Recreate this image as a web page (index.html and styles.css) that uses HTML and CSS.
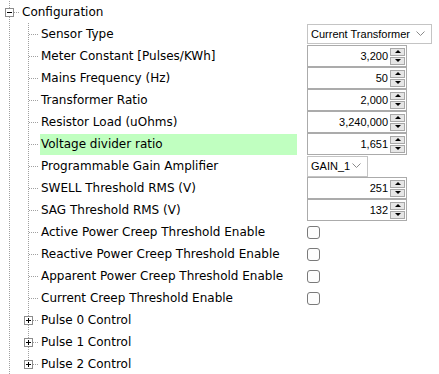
FILE: index.html
```html
<!DOCTYPE html>
<html lang="en">
<head>
    <meta charset="UTF-8">
    <title>Configuration</title>
    <link rel="stylesheet" href="styles.css">
</head>
<body>

<div class="tree">
    <div class="row">
        <span class="lv lv-root">
            <svg class="exp" width="9" height="9" viewBox="0 0 9 9"><rect x="0.5" y="0.5" width="8" height="8" fill="#fff" stroke="#8c8c8c"/><path d="M2 4.5h5" stroke="#000"/></svg>
        </span>
        <span class="name">Configuration</span>
    </div>

    <div class="row">
        <span class="lv outer"></span><span class="lv branch"></span>
        <span class="label">Sensor Type</span>
        <div class="combo wide"><span>Current Transformer</span><svg class="chev" width="9" height="6" viewBox="0 0 9 6"><path d="M0.5 0.5l4 4 4-4" fill="none" stroke="#8a8a8a"/></svg></div>
    </div>
    <div class="row">
        <span class="lv outer"></span><span class="lv branch"></span>
        <span class="label">Meter Constant [Pulses/KWh]</span>
        <div class="spin"><span class="val">3,200</span><span class="arrows"><span class="btn up"></span><span class="btn down"></span></span></div>
    </div>
    <div class="row">
        <span class="lv outer"></span><span class="lv branch"></span>
        <span class="label">Mains Frequency (Hz)</span>
        <div class="spin"><span class="val">50</span><span class="arrows"><span class="btn up"></span><span class="btn down"></span></span></div>
    </div>
    <div class="row">
        <span class="lv outer"></span><span class="lv branch"></span>
        <span class="label">Transformer Ratio</span>
        <div class="spin"><span class="val">2,000</span><span class="arrows"><span class="btn up"></span><span class="btn down"></span></span></div>
    </div>
    <div class="row">
        <span class="lv outer"></span><span class="lv branch"></span>
        <span class="label">Resistor Load (uOhms)</span>
        <div class="spin"><span class="val">3,240,000</span><span class="arrows"><span class="btn up"></span><span class="btn down"></span></span></div>
    </div>
    <div class="row">
        <span class="lv outer"></span><span class="lv branch"></span>
        <span class="label changed">Voltage divider ratio</span>
        <div class="spin"><span class="val">1,651</span><span class="arrows"><span class="btn up"></span><span class="btn down"></span></span></div>
    </div>
    <div class="row">
        <span class="lv outer"></span><span class="lv branch"></span>
        <span class="label">Programmable Gain Amplifier</span>
        <div class="combo small"><span>GAIN_1</span><svg class="chev" width="9" height="6" viewBox="0 0 9 6"><path d="M0.5 0.5l4 4 4-4" fill="none" stroke="#8a8a8a"/></svg></div>
    </div>
    <div class="row">
        <span class="lv outer"></span><span class="lv branch"></span>
        <span class="label">SWELL Threshold RMS (V)</span>
        <div class="spin"><span class="val">251</span><span class="arrows"><span class="btn up"></span><span class="btn down"></span></span></div>
    </div>
    <div class="row">
        <span class="lv outer"></span><span class="lv branch"></span>
        <span class="label">SAG Threshold RMS (V)</span>
        <div class="spin"><span class="val">132</span><span class="arrows"><span class="btn up"></span><span class="btn down"></span></span></div>
    </div>
    <div class="row">
        <span class="lv outer"></span><span class="lv branch"></span>
        <span class="label">Active Power Creep Threshold Enable</span>
        <span class="check"></span>
    </div>
    <div class="row">
        <span class="lv outer"></span><span class="lv branch"></span>
        <span class="label">Reactive Power Creep Threshold Enable</span>
        <span class="check"></span>
    </div>
    <div class="row">
        <span class="lv outer"></span><span class="lv branch"></span>
        <span class="label">Apparent Power Creep Threshold Enable</span>
        <span class="check"></span>
    </div>
    <div class="row">
        <span class="lv outer"></span><span class="lv branch"></span>
        <span class="label">Current Creep Threshold Enable</span>
        <span class="check"></span>
    </div>

    <div class="row">
        <span class="lv outer"></span>
        <span class="lv branch node">
            <svg class="exp" width="9" height="9" viewBox="0 0 9 9"><rect x="0.5" y="0.5" width="8" height="8" fill="#fff" stroke="#8c8c8c"/><path d="M2 4.5h5M4.5 2v5" stroke="#000"/></svg>
        </span>
        <span class="group">Pulse 0 Control</span>
    </div>
    <div class="row">
        <span class="lv outer"></span>
        <span class="lv branch node">
            <svg class="exp" width="9" height="9" viewBox="0 0 9 9"><rect x="0.5" y="0.5" width="8" height="8" fill="#fff" stroke="#8c8c8c"/><path d="M2 4.5h5M4.5 2v5" stroke="#000"/></svg>
        </span>
        <span class="group">Pulse 1 Control</span>
    </div>
    <div class="row">
        <span class="lv outer"></span>
        <span class="lv branch node last">
            <svg class="exp" width="9" height="9" viewBox="0 0 9 9"><rect x="0.5" y="0.5" width="8" height="8" fill="#fff" stroke="#8c8c8c"/><path d="M2 4.5h5M4.5 2v5" stroke="#000"/></svg>
        </span>
        <span class="group">Pulse 2 Control</span>
    </div>
</div>

</body>
</html>
```

FILE: styles.css
```css
body {
    margin: 0;
    background: #fff;
    font-family: "DejaVu Sans", Verdana, sans-serif;
    font-size: 12px;
    color: #000;
}
.tree {
    padding-top: 1px;
}
.row {
    display: flex;
    align-items: center;
    height: 22px;
}
.lv {
    flex: none;
    width: 19px;
    height: 22px;
    display: flex;
    align-items: center;
}
/* dotted tree connectors */
.outer {
    background: repeating-linear-gradient(to bottom, #a0a0a0 0 1px, transparent 1px 2px) no-repeat 9px 0 / 1px 100%;
}
.lv-root {
    padding-left: 5px;
    box-sizing: border-box;
    background:
        repeating-linear-gradient(to bottom, #a0a0a0 0 1px, transparent 1px 2px) no-repeat 9px 0 / 1px 100%,
        repeating-linear-gradient(to right, #a0a0a0 0 1px, transparent 1px 2px) no-repeat 14px 11px / 6px 1px;
}
.branch {
    background:
        repeating-linear-gradient(to bottom, #a0a0a0 0 1px, transparent 1px 2px) no-repeat 9px 0 / 1px 100%,
        repeating-linear-gradient(to right, #a0a0a0 0 1px, transparent 1px 2px) no-repeat 10px 11px / 9px 1px;
}
.branch.node {
    padding-left: 5px;
    box-sizing: border-box;
    background:
        repeating-linear-gradient(to bottom, #a0a0a0 0 1px, transparent 1px 2px) no-repeat 9px 0 / 1px 100%,
        repeating-linear-gradient(to right, #a0a0a0 0 1px, transparent 1px 2px) no-repeat 14px 11px / 5px 1px;
}
.branch.node.last {
    background:
        repeating-linear-gradient(to bottom, #a0a0a0 0 1px, transparent 1px 2px) no-repeat 9px 0 / 1px 50%,
        repeating-linear-gradient(to right, #a0a0a0 0 1px, transparent 1px 2px) no-repeat 14px 11px / 5px 1px;
}
.exp {
    display: block;
}
.name {
    margin-left: 3px;
}
.group {
    margin-left: 2px;
    padding-left: 1px;
}
.label {
    flex: none;
    width: 256px;
    height: 21px;
    line-height: 21px;
    margin-left: 2px;
    padding-left: 1px;
    white-space: nowrap;
}
.changed {
    background-color: #c0ffc0; /* edited value */
}
/* controls */
.combo {
    margin-left: 10px;
    height: 20px;
    box-sizing: border-box;
    border: 1px solid #c4c4c4;
    background: #fff;
    display: flex;
    align-items: center;
    justify-content: space-between;
    padding: 0 6px 0 3px;
    font-family: "Liberation Sans", Arial, sans-serif;
    font-size: 11px;
    white-space: nowrap;
}
.combo.wide {
    width: 125px;
}
.combo.small {
    width: 61px;
    height: 21px;
}
.spin {
    margin-left: 10px;
    width: 100px;
    height: 22px;
    box-sizing: border-box;
    border: 1px solid #ababab;
    background: #fff;
    display: flex;
    align-items: center;
    font-family: "Liberation Sans", Arial, sans-serif;
    font-size: 11px;
}
.val {
    flex: 1;
    text-align: right;
    padding-right: 2px;
}
.arrows {
    width: 15px;
    margin-right: 1px;
    display: flex;
    flex-direction: column;
    gap: 1px;
}
.btn {
    height: 8px;
    box-sizing: border-box;
    border: 1px solid #a8a8a8;
    background: #e6e6e6;
    display: flex;
    align-items: center;
    justify-content: center;
}
.up::after {
    content: "";
    border-left: 3px solid transparent;
    border-right: 3px solid transparent;
    border-bottom: 3px solid #000;
}
.down::after {
    content: "";
    border-left: 3px solid transparent;
    border-right: 3px solid transparent;
    border-top: 3px solid #000;
}
.check {
    margin-left: 10px;
    width: 13px;
    height: 13px;
    box-sizing: border-box;
    border: 1px solid #7a7a7a;
    border-radius: 3px;
    background: #fdfdfd;
}
```
